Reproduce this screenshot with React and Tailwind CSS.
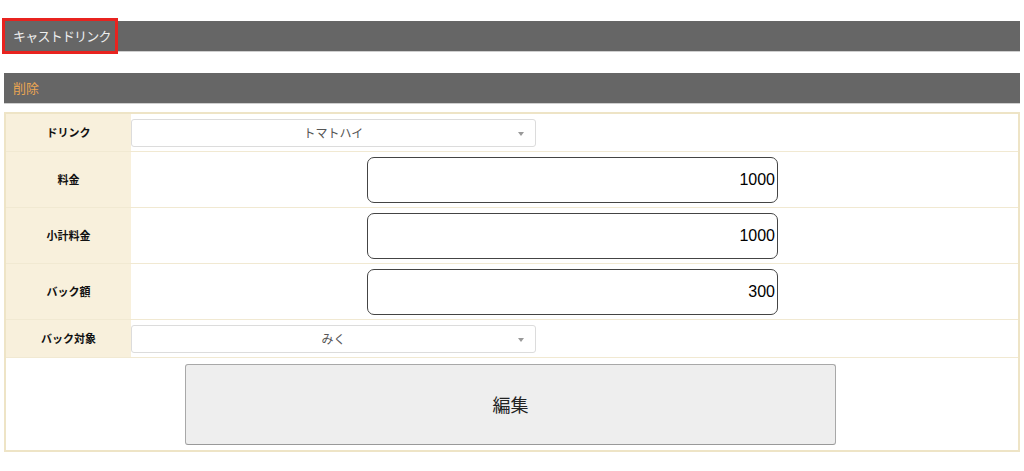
import React from 'react'

const jp = { fontFamily: '"Noto Sans CJK JP", "Noto Sans", sans-serif' }

const SelectBox = ({ value }) => (
  <div className="relative w-[405px] h-[28px] border border-[#dcdcdc] rounded-[3px] bg-white flex items-center justify-center text-[12px] text-[#555]">
    {value}
    <span className="absolute right-[11px] top-[12px] w-0 h-0 border-l-[3px] border-r-[3px] border-t-[4px] border-l-transparent border-r-transparent border-t-[#999]"></span>
  </div>
)

const NumInput = ({ value }) => (
  <div
    className="ml-[236px] w-[411px] h-[46px] border-[1.5px] border-[#444] rounded-[7px] bg-white flex items-center justify-end pr-[2px] text-[16px] text-black"
    style={{ fontFamily: '"Liberation Sans", Arial, sans-serif' }}
  >
    {value}
  </div>
)

const Row = ({ label, h, children }) => (
  <div className={`flex border-b border-[#f1e9d2] ${h}`}>
    <div className="w-[125px] shrink-0 bg-[#f8f0dc] flex items-center justify-center text-[11px] font-bold text-[#111]">
      {label}
    </div>
    <div className="flex-1 flex items-center">{children}</div>
  </div>
)

const App = () => {
  return (
    <div className="relative w-full h-[471px] bg-white px-[4px] pt-[21px]" style={jp}>
      {/* header bars */}
      <div className="h-[31px] bg-[#666666] border-b border-[#cfcfcf] pl-[9px] flex items-center text-[13px] tracking-[-0.06em] text-[#eeeeee]">
        キャストドリンク
      </div>
      <div className="absolute left-[2px] top-[18px] w-[116px] h-[36px] border-[3px] border-[#e8231f]"></div>

      <div className="mt-[21px] h-[31px] bg-[#666666] border-b border-[#cfcfcf] pl-[9px] flex items-center text-[13px] text-[#eaa552]">
        削除
      </div>

      {/* form table */}
      <div className="mt-[8px] border-2 border-[#eee4c6]">
        <Row label="ドリンク" h="h-[38px]">
          <SelectBox value="トマトハイ" />
        </Row>
        <Row label="料金" h="h-[56px]">
          <NumInput value="1000" />
        </Row>
        <Row label="小計料金" h="h-[56px]">
          <NumInput value="1000" />
        </Row>
        <Row label="バック額" h="h-[56px]">
          <NumInput value="300" />
        </Row>
        <Row label="バック対象" h="h-[38px]">
          <SelectBox value="みく" />
        </Row>
        <div className="h-[92px] flex items-center justify-center pr-[3px]">
          <button className="w-[651px] h-[81px] bg-[#eeeeee] border border-[#a8a8a8] border-b-[#999] rounded-[3px] text-[18px] text-[#222]">
            編集
          </button>
        </div>
      </div>
    </div>
  )
}

export default App
